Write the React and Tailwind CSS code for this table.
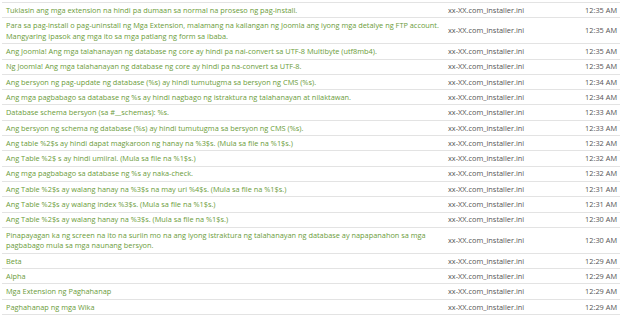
const rows = [
    ["Tuklasin ang mga extension na hindi pa dumaan sa normal na proseso ng pag-install.", "12:35 AM"],
    ["Para sa pag-install o pag-uninstall ng Mga Extension, malamang na kailangan ng Joomla ang iyong mga detalye ng FTP account. Mangyaring ipasok ang mga ito sa mga patlang ng form sa ibaba.", "12:35 AM"],
    ["Ang Joomla! Ang mga talahanayan ng database ng core ay hindi pa nai-convert sa UTF-8 Multibyte (utf8mb4).", "12:35 AM"],
    ["Ng Joomla! Ang mga talahanayan ng database ng core ay hindi pa na-convert sa UTF-8.", "12:35 AM"],
    ["Ang bersyon ng pag-update ng database (%s) ay hindi tumutugma sa bersyon ng CMS (%s).", "12:34 AM"],
    ["Ang mga pagbabago sa database ng %s ay hindi nagbago ng istraktura ng talahanayan at nilaktawan.", "12:34 AM"],
    ["Database schema bersyon (sa #__schemas): %s.", "12:33 AM"],
    ["Ang bersyon ng schema ng database (%s) ay hindi tumutugma sa bersyon ng CMS (%s).", "12:33 AM"],
    ["Ang table %2$s ay hindi dapat magkaroon ng hanay na %3$s. (Mula sa file na %1$s.)", "12:32 AM"],
    ["Ang Table %2$ s ay hindi umiiral. (Mula sa file na %1$s.)", "12:32 AM"],
    ["Ang mga pagbabago sa database ng %s ay naka-check.", "12:32 AM"],
    ["Ang Table %2$s ay walang hanay na %3$s na may uri %4$s. (Mula sa file na %1$s.)", "12:31 AM"],
    ["Ang Table %2$s ay walang index %3$s. (Mula sa file na %1$s.)", "12:31 AM"],
    ["Ang Table %2$s ay walang hanay na %3$s. (Mula sa file na %1$s.)", "12:30 AM"],
    ["Pinapayagan ka ng screen na ito na suriin mo na ang iyong istraktura ng talahanayan ng database ay napapanahon sa mga pagbabago mula sa mga naunang bersyon.", "12:30 AM"],
    ["Beta", "12:29 AM"],
    ["Alpha", "12:29 AM"],
    ["Mga Extension ng Paghahanap", "12:29 AM"],
    ["Paghahanap ng mga Wika", "12:29 AM"],
];

export default function App() {
    return (
        <div className="w-[640px] h-[317px] overflow-hidden bg-white pl-[2px] pt-[2px] font-['Open_Sans',sans-serif] text-[7.36px] leading-[10.7px]">
            <table className="w-[618px] table-fixed border-collapse">
                <colgroup>
                    <col className="w-[442px]" />
                    <col className="w-[120px]" />
                    <col />
                </colgroup>
                <tbody>
                    {rows.map(([text, time], i) => (
                        <tr key={i} className="border-t border-b border-[#e3e3e3]">
                            <td className="pl-[4px] pr-[1px] py-[1.8px] align-middle text-[#6b9c3a]">
                                {text}
                            </td>
                            <td className="px-[4px] py-[1.8px] align-middle text-[#555]">
                                xx-XX.com_installer.ini
                            </td>
                            <td className="pl-[4px] pr-[3px] py-[1.8px] align-middle text-right text-[#555]">
                                {time}
                            </td>
                        </tr>
                    ))}
                </tbody>
            </table>
        </div>
    );
}
